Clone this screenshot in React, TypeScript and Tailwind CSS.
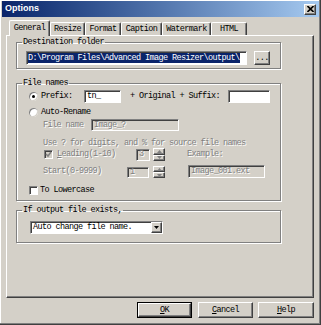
import React from "react";

const mono = "font-['Liberation_Mono',monospace] text-[8.5px] tracking-[-0.6px]";
const sunken =
  "border border-t-[#808080] border-l-[#808080] border-r-white border-b-white shadow-[inset_1px_1px_0_#404040]";
const raised =
  "border border-t-white border-l-white border-r-[#404040] border-b-[#404040] shadow-[inset_-1px_-1px_0_#808080]";
const etched = "border border-[#808080] shadow-[inset_1px_1px_0_#fff,1px_1px_0_#fff]";
const dis = "text-[#808080] [text-shadow:1px_1px_0_#fff]";

const Radio = ({ checked }: { checked?: boolean }) => (
  <span className="w-[9px] h-[9px] rounded-full bg-white shadow-[inset_1px_1px_0_#808080,inset_-1px_-1px_0_#d4d0c8] flex items-center justify-center shrink-0">
    {checked && <span className="w-[3px] h-[3px] rounded-full bg-black" />}
  </span>
);

const Check = ({ checked, disabled }: { checked?: boolean; disabled?: boolean }) => (
  <span
    className={`w-[9px] h-[9px] shrink-0 flex items-center justify-center ${sunken} ${
      disabled ? "bg-[#d4d0c8]" : "bg-white"
    }`}
  >
    {checked && (
      <svg width="7" height="7" viewBox="0 0 7 7">
        <path d="M1 3 L3 5 L6 1" stroke={disabled ? "#808080" : "#000"} strokeWidth="1.5" fill="none" />
      </svg>
    )}
  </span>
);

const Spin = ({ h = 13 }: { h?: number }) => (
  <div className={`flex flex-col w-[12px] ${h === 13 ? "h-[13px]" : "h-[12px]"}`}>
    {[0, 1].map((i) => (
      <div key={i} className={`flex-1 bg-[#d4d0c8] flex items-center justify-center ${raised}`}>
        <svg width="5" height="3" viewBox="0 0 5 3">
          <path d={i === 0 ? "M0 3 L2.5 0 L5 3 Z" : "M0 0 L2.5 3 L5 0 Z"} fill="#808080" />
        </svg>
      </div>
    ))}
  </div>
);

const tabs = [
  { label: "General", w: "w-[41px]" },
  { label: "Resize", w: "w-[35px]" },
  { label: "Format", w: "w-[36px]" },
  { label: "Caption", w: "w-[41px]" },
  { label: "Watermark", w: "w-[49px]" },
  { label: "HTML", w: "w-[36px]" },
];

export default function App() {
  return (
    <div
      className={`w-[321px] h-[325px] bg-[#d4d0c8] flex flex-col text-black ${mono} shadow-[inset_-1px_-1px_0_#404040,inset_-2px_-2px_0_#808080,inset_1px_1px_0_#fff]`}
    >
      <div className="mt-[1px] mx-[2px] h-[16px] bg-gradient-to-r from-[#0a246a] to-[#a6caf0] flex items-center justify-between pl-[3px] pr-[3px]">
        <span className="font-['Liberation_Sans',sans-serif] font-bold text-[9px] tracking-normal text-white">
          Options
        </span>
        <div className={`w-[12px] h-[11px] bg-[#d4d0c8] flex items-center justify-center ${raised}`}>
          <svg width="7" height="6" viewBox="0 0 7 6">
            <path d="M0.5 0 L6.5 6 M6.5 0 L0.5 6" stroke="#000" strokeWidth="1.6" />
          </svg>
        </div>
      </div>

      <div className="mt-[3px] ml-[9px] h-[15px] flex items-end">
        {tabs.map((t, i) => (
          <div
            key={t.label}
            className={`${t.w} flex items-center justify-center bg-[#d4d0c8] rounded-t-[2px] border-t border-l border-r border-t-white border-l-white border-r-[#404040] shadow-[inset_-1px_0_0_#808080] ${
              i === 0 ? "relative z-10 h-[16px] -mb-[1px]" : "h-[13px]"
            }`}
          >
            {t.label}
          </div>
        ))}
      </div>

      <div className="ml-[6px] w-[308px] h-[263px] border border-t-white border-l-white border-r-[#404040] border-b-[#404040] shadow-[inset_-1px_-1px_0_#808080]">
        <fieldset className={`ml-[9px] w-[265px] h-[33px] ${etched}`}>
          <legend className="ml-[5px] px-[1px] leading-[12px]">Destination folder</legend>
          <div className="flex pl-[9px] pt-[3px]">
            <div className={`w-[221px] h-[14px] bg-white flex items-center pl-[1px] ${sunken}`}>
              <span className="bg-[#0a246a] text-white leading-[10px]">
                D:\Program Files\Advanced Image Resizer\output\
              </span>
            </div>
            <div className={`ml-[7px] w-[16px] h-[14px] flex items-center justify-center ${raised}`}>...</div>
          </div>
        </fieldset>

        <fieldset className={`mt-[8px] ml-[9px] w-[265px] h-[124px] ${etched}`}>
          <legend className="ml-[5px] px-[1px] leading-[12px]">File names</legend>
          <div className="flex items-center h-[13px] mt-[1px] pl-[12px]">
            <Radio checked />
            <span className="ml-[2px] w-[44px] pl-[1px]">Prefix:</span>
            <div className={`w-[37px] h-[13px] bg-white flex items-center pl-[2px] ${sunken}`}>tn_</div>
            <span className="ml-[9px] w-[98px]">+ Original + Suffix:</span>
            <div className={`w-[42px] h-[13px] bg-white ${sunken}`} />
          </div>
          <div className="flex items-center h-[12px] mt-[3px] pl-[12px]">
            <Radio />
            <span className="ml-[3px]">Auto-Rename</span>
          </div>
          <div className="flex items-center h-[12px] mt-[1px] pl-[26px]">
            <span className={`w-[48px] ${dis}`}>File name</span>
            <div className={`w-[88px] h-[12px] flex items-center pl-[2px] ${sunken} ${dis}`}>Image_?</div>
          </div>
          <div className={`flex items-center h-[10px] mt-[7px] pl-[26px] ${dis}`}>
            Use ? for digits, and % for source file names
          </div>
          <div className="flex items-center h-[13px] pl-[27px]">
            <Check checked disabled />
            <span className={`ml-[4px] w-[79px] ${dis}`}>
              <span className="underline">L</span>eading(1-10)
            </span>
            <div className={`w-[14px] h-[12px] flex items-center pl-[2px] ${sunken} ${dis}`}>3</div>
            <div className="ml-[3px]">
              <Spin />
            </div>
            <span className={`ml-[22px] ${dis}`}>Example:</span>
          </div>
          <div className="flex items-end h-[13px] mt-[4px] pl-[26px]">
            <span className={`w-[84px] self-center ${dis}`}>Start(0-9999)</span>
            <div className={`w-[22px] h-[11px] flex items-center pl-[2px] ${sunken} ${dis}`}>1</div>
            <div className="ml-[4px]">
              <Spin h={12} />
            </div>
            <div className={`ml-[23px] w-[77px] h-[13px] flex items-center pl-[2px] ${sunken} ${dis}`}>
              Image_001.ext
            </div>
          </div>
          <div className="flex items-center h-[10px] mt-[7px] pl-[12px]">
            <Check />
            <span className="ml-[2px]">To Lowercase</span>
          </div>
        </fieldset>

        <fieldset className={`mt-[3px] ml-[9px] w-[265px] h-[39px] ${etched}`}>
          <legend className="ml-[5px] px-[1px] leading-[12px]">If output file exists,</legend>
          <div className="pl-[13px] pt-[5px]">
            <div className={`w-[133px] h-[13px] bg-white flex items-center justify-between pl-[2px] ${sunken}`}>
              <span>Auto change file name.</span>
              <div className={`w-[11px] h-[11px] bg-[#d4d0c8] flex items-center justify-center ${raised}`}>
                <svg width="5" height="3" viewBox="0 0 5 3">
                  <path d="M0 0 L2.5 3 L5 0 Z" fill="#000" />
                </svg>
              </div>
            </div>
          </div>
        </fieldset>
      </div>

      <div className="mt-[4px] ml-[137px] flex">
        <div className="w-[55px] h-[16px] border border-black">
          <div className={`w-full h-full flex items-center justify-center ${raised}`}>
            <span>
              <span className="underline">O</span>K
            </span>
          </div>
        </div>
        <div className={`ml-[6px] w-[55px] h-[16px] flex items-center justify-center ${raised}`}>
          <span>
            <span className="underline">C</span>ancel
          </span>
        </div>
        <div className={`ml-[5px] w-[56px] h-[16px] flex items-center justify-center ${raised}`}>
          <span>
            <span className="underline">H</span>elp
          </span>
        </div>
      </div>
    </div>
  );
}
